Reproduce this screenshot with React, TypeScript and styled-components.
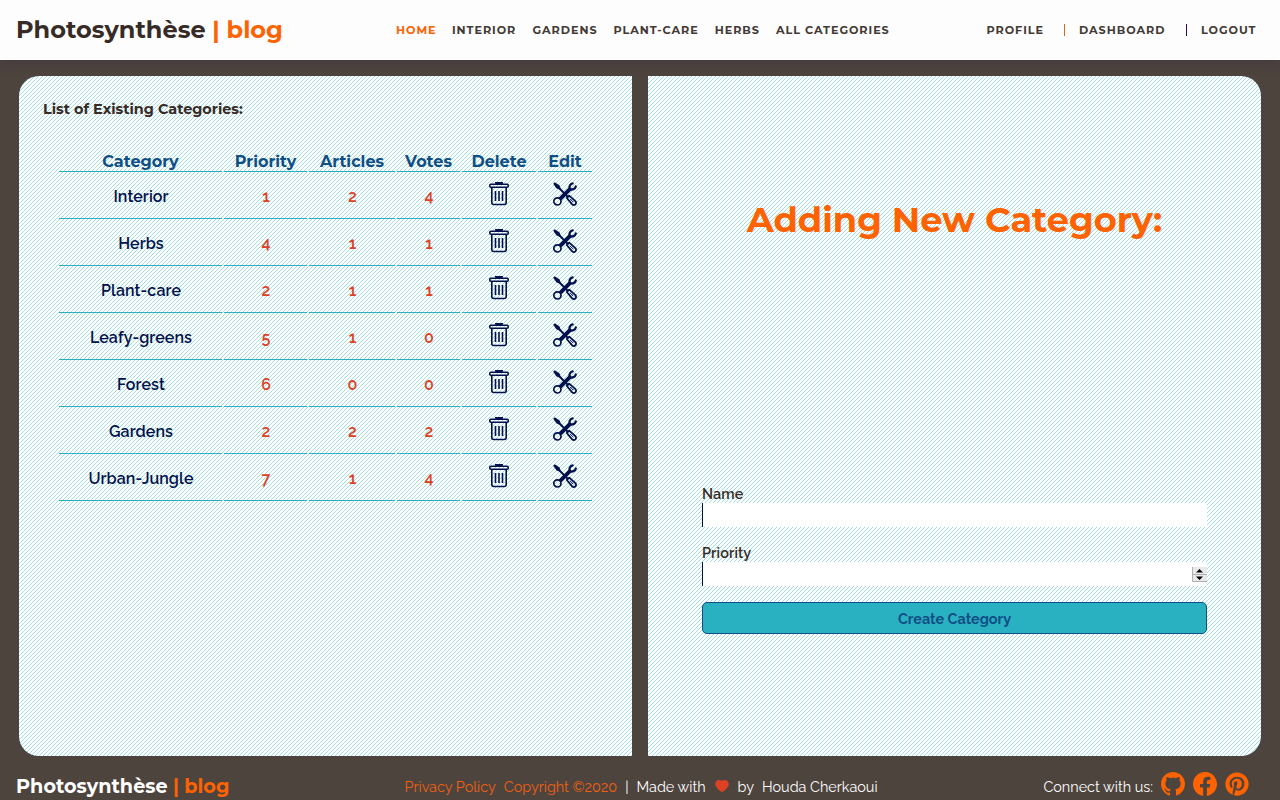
import React from "react";
import styled, { createGlobalStyle } from "styled-components";
import { AiFillHeart } from "react-icons/ai";
import { FaPinterest } from "react-icons/fa";
import { BsFacebook, BsGithub } from "react-icons/bs";

const Global = createGlobalStyle`
  * { box-sizing: border-box; }
  html, body { margin: 0; height: 800px; overflow: hidden; background: #4d443e; }
  body { font-family: Montserrat, Inter, sans-serif; color: #362b27; }
`;

const heading = `font-family: Montserrat, Inter, sans-serif; font-weight: 700;`;
const copy = `font-family: Raleway, Lato, sans-serif; font-variant-numeric: oldstyle-nums;`;

const Page = styled.div`
  height: 800px;
  display: flex;
  flex-direction: column;
  overflow: hidden;
`;
const Header = styled.header`
  height: 60px;
  flex: none;
  display: flex;
  align-items: center;
  background: #fdfdfd;
  padding: 0 24px 0 16px;
  box-shadow: 0 1px 12px rgba(47, 27, 65, 0.3);
`;
const Logo = styled.div<{ $small?: boolean }>`
  ${heading}
  white-space: nowrap;
  width: ${(p) => (p.$small ? 388.5 : 380)}px;
  padding-bottom: ${(p) => (p.$small ? 0 : 2)}px;
  font-size: ${(p) => (p.$small ? 19.2 : 24)}px;
  color: ${(p) => (p.$small ? "#fff" : "#362b27")};
  span { color: #ff6200; }
`;
const Nav = styled.nav`
  display: flex;
  gap: 16px;
`;
const NavLink = styled.a<{ $active?: boolean; $w: number }>`
  ${heading}
  font-size: 11.2px;
  letter-spacing: 0.95px;
  white-space: nowrap;
  width: ${(p) => p.$w}px;
  color: ${(p) => (p.$active ? "#ff6200" : "#433a35")};
`;
const UserNav = styled.nav`
  display: flex;
  align-items: center;
  margin-left: auto;
`;
const Divider = styled.i<{ $color: string; $left: number }>`
  width: 1px;
  height: 12px;
  margin: 0 14px 0 ${(p) => p.$left}px;
  background: ${(p) => p.$color};
`;
const Main = styled.main`
  height: 680px;
  flex: none;
  margin: 16px 19px 0;
  display: grid;
  grid-template-columns: 613px 613px;
  gap: 16px;
`;
const Panel = styled.section<{ $side: "left" | "right" }>`
  background: repeating-linear-gradient(135deg, #a0dfe4 0 0.7071px, #fff 0.7071px 2.8284px);
  border-radius: ${(p) => (p.$side === "left" ? "20px 0 0 20px" : "0 20px 20px 0")};
  padding: ${(p) => (p.$side === "left" ? "24px 24px 0 24px" : "0 54px")};
`;
const ListTitle = styled.h2`
  ${heading}
  margin: 0 0 35px;
  font-size: 14.4px;
  line-height: 18px;
`;
const Table = styled.table`
  table-layout: fixed;
  width: 537px;
  margin-left: 14px;
  border-spacing: 2px 0;
  text-align: center;
  th, td { padding: 0; border-bottom: 1px solid #2ab1c1; }
`;
const Th = styled.th`
  ${heading}
  height: 19px;
  line-height: 18px;
  font-size: 16px;
  color: #104f85;
`;
const NameCell = styled.td`
  ${copy}
  height: 47px;
  font-size: 16px;
  font-weight: 600;
  letter-spacing: 0.08px;
  && { padding: 2px 0 0 1px; }
  color: #03124e;
`;
const NumberCell = styled.td`
  ${copy}
  font-size: 16px;
  font-weight: 600;
  && { padding: 3px 0 0 1px; }
  color: #dd4124;
`;
const IconCell = styled.td`
  color: #03124e;
  svg { display: block; margin: -3px auto 0; }
`;
const FormTitle = styled.h1`
  ${heading}
  margin: 0;
  padding-top: 120px;
  height: 408px;
  font-size: 35.2px;
  line-height: 48px;
  text-align: center;
  white-space: nowrap;
  color: #ff6200;
`;
const Field = styled.label`
  ${copy}
  display: block;
  margin-bottom: 16px;
  height: 43px;
  font-size: 14.4px;
  font-weight: 600;
  line-height: 19px;
  letter-spacing: 0.1px;
  color: #362b27;
`;
const FieldText = styled.span`
  display: block;
  height: 19px;
`;
const InputBox = styled.span`
  display: flex;
  align-items: center;
  justify-content: flex-end;
  height: 24px;
  background: #fff;
  border-left: 1px solid #03124e;
`;
const SubmitButton = styled.button`
  ${copy}
  display: block;
  width: 505px;
  height: 32px;
  border: 1px solid #104f85;
  border-radius: 5px;
  background: #2ab1c1;
  color: #104f85;
  font-size: 14.4px;
  font-weight: 700;
`;
const Footer = styled.footer`
  ${copy}
  flex: none;
  height: 60px;
  padding: 0 31px 0 16px;
  display: flex;
  align-items: center;
  font-size: 14.4px;
  color: #fdfdfd;
`;
const Credits = styled.div`
  display: flex;
  align-items: center;
  gap: 8px;
  white-space: nowrap;
  a { color: #f0600f; }
`;
const Social = styled.div`
  display: flex;
  align-items: center;
  gap: 8px;
  margin-left: auto;
  svg { color: #ff6200; margin-top: -4px; }
`;

const TrashIcon = () => (
  <svg width="20" height="24" viewBox="0 0 20 24" fill="none" stroke="currentColor" strokeWidth="1.6">
    <path d="M7 1.7V1h6v.7" strokeWidth="2" />
    <rect x=".8" y="2.2" width="18.4" height="3" rx="1" />
    <path d="M2.8 5v15.5q0 2 2 2h10.4q2 0 2-2V5M6.5 9v10M10 9v10M13.5 9v10" />
  </svg>
);
const ToolsIcon = () => (
  <svg width="24" height="24" viewBox="0 0 24 24" fill="none" stroke="currentColor">
    <circle cx="4.4" cy="19.4" r="3.6" strokeWidth="1.7" />
    <path d="M7.2 16.8 17.4 6.6" strokeWidth="4" />
    <path d="M19.6 1.3a3.9 3.9 0 0 0-2.6 5.6 3.9 3.9 0 0 0 5.8-2.4" strokeWidth="2.3" strokeLinecap="round" />
    <path d="m5 5 10 10" strokeWidth="2" />
    <path d="M.2 1.8 1.8.2 6.6 3.6 8 8 3.6 6.6z" fill="currentColor" stroke="none" />
    <path d="m13.8 16 2.4-2.4 6.2 5.6a2.2 2.2 0 0 1-3.2 3.2z" strokeWidth="1.8" strokeLinejoin="round" />
    <path d="m17 16.8 3.4 3.4" strokeWidth="1" />
  </svg>
);
const Spinner = () => (
  <svg width="15" height="15" viewBox="0 0 15 15">
    <path d="M0 0h15v15H0z" fill="#e9e9e9" />
    <path d="M.5 0v14.5H15M0 7.5h15" fill="none" stroke="#b0b0b0" />
    <path d="M4 5.5h7L7.5 2zM4 9.5h7L7.5 13z" fill="#000" />
  </svg>
);

const columns: [string, number][] = [
  ["Category", 165], ["Priority", 85], ["Articles", 88], ["Votes", 65], ["Delete", 76], ["Edit", 56],
];
const rows: [string, number, number, number][] = [
  ["Interior", 1, 2, 4], ["Herbs", 4, 1, 1], ["Plant-care", 2, 1, 1], ["Leafy-greens", 5, 1, 0],
  ["Forest", 6, 0, 0], ["Gardens", 2, 2, 2], ["Urban-Jungle", 7, 1, 4],
];
const links: [string, number][] = [
  ["HOME", 40], ["INTERIOR", 64.5], ["GARDENS", 65], ["PLANT-CARE", 85.2], ["HERBS", 45.3], ["ALL CATEGORIES", 114],
];

export default function App() {
  return (
    <>
      <Global />
      <Page>
        <Header>
          <Logo>Photosynthèse <span>| blog</span></Logo>
          <Nav>
            {links.map(([label, w], i) => (
              <NavLink key={label} $w={w} $active={i === 0}>{label}</NavLink>
            ))}
          </Nav>
          <UserNav>
            <NavLink $w={57.5}>PROFILE</NavLink>
            <Divider $color="#d2691e" $left={20} />
            <NavLink $w={87}>DASHBOARD</NavLink>
            <Divider $color="#2a0a5e" $left={20} />
            <NavLink $w={55}>LOGOUT</NavLink>
          </UserNav>
        </Header>
        <Main>
          <Panel $side="left">
            <ListTitle>List of Existing Categories:</ListTitle>
            <Table>
              <colgroup>{columns.map(([c, w]) => <col key={c} width={w - 2} />)}</colgroup>
              <thead><tr>{columns.map(([c]) => <Th key={c}>{c}</Th>)}</tr></thead>
              <tbody>
                {rows.map(([name, ...values]) => (
                  <tr key={name}>
                    <NameCell>{name}</NameCell>
                    {values.map((v, i) => <NumberCell key={i}>{v}</NumberCell>)}
                    <IconCell><TrashIcon /></IconCell>
                    <IconCell><ToolsIcon /></IconCell>
                  </tr>
                ))}
              </tbody>
            </Table>
          </Panel>
          <Panel $side="right">
            <FormTitle>Adding New Category:</FormTitle>
            <Field><FieldText>Name</FieldText><InputBox /></Field>
            <Field><FieldText>Priority</FieldText><InputBox><Spinner /></InputBox></Field>
            <SubmitButton>Create Category</SubmitButton>
          </Panel>
        </Main>
        <Footer>
          <Logo $small>Photosynthèse <span>| blog</span></Logo>
          <Credits>
            <a>Privacy Policy</a><a>Copyright ©2020</a><span>|</span><span>Made with</span>
            <AiFillHeart size={16} color="#dd4124" /><span>by</span><span>Houda Cherkaoui</span>
          </Credits>
          <Social>
            <span>Connect with us:</span>
            <BsGithub size={24} /><BsFacebook size={24} /><FaPinterest size={24} />
          </Social>
        </Footer>
      </Page>
    </>
  );
}
